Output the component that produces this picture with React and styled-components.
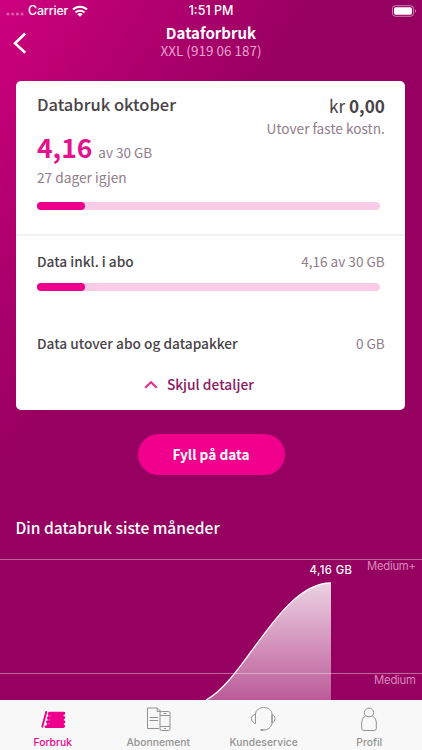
import React from "react";
import styled, { createGlobalStyle } from "styled-components";

const Global = createGlobalStyle`
  * { box-sizing: border-box; }
  body { margin: 0; }
`;

const brand = `"Noto Sans CJK SC", sans-serif`;
const system = `Inter, sans-serif`;

const Screen = styled.div`
  width: 422px;
  height: 750px;
  overflow: hidden;
  display: flex;
  flex-direction: column;
  color: #fff;
  font-family: ${brand};
  background: linear-gradient(124deg, #ce007e 0, #b2006f 130px, #960060 275px);
`;

const StatusBar = styled.div`
  height: 21px;
  flex: none;
  display: grid;
  grid-template-columns: 1fr auto 1fr;
  align-items: center;
  padding: 0 6px;
  font: 500 12.5px/21px ${system};
`;

const Carrier = styled.div`
  display: flex;
  align-items: center;
  letter-spacing: -0.2px;
`;

const Dots = styled.svg`
  width: 18px;
  height: 4px;
  margin: 7px 4px 0 0;
`;

const Wifi = styled.svg`
  width: 16px;
  height: 12px;
  margin-left: 4px;
`;

const Battery = styled.svg`
  width: 26px;
  height: 12px;
  justify-self: end;
  margin-right: -1px;
`;

const Header = styled.header`
  height: 60px;
  flex: none;
  display: grid;
  grid-template-columns: 40px 1fr 40px;
`;

const Back = styled.svg`
  width: 14px;
  height: 22px;
  margin: 11px 0 0 13px;
`;

const Titles = styled.div`
  text-align: center;
`;

const Line = styled.div`
  white-space: nowrap;
  font-size: ${(p) => p.$size}px;
  line-height: ${(p) => p.$line}px;
  font-weight: ${(p) => p.$weight || 400};
  color: ${(p) => p.$color || "inherit"};
`;

const Card = styled.section`
  flex: none;
  width: 389px;
  height: 329px;
  margin: 0 0 0 16.4px;
  border-radius: 5px;
  background: #fff;
  color: #484347;
`;

const Summary = styled.div`
  height: 155px;
  padding: 10px 20.6px 0;
  border-bottom: 2px solid #f2f0f2;
`;

const Details = styled.div`
  padding: 13px 20.6px 0;
`;

const Row = styled.div`
  display: flex;
  justify-content: space-between;
  align-items: ${(p) => p.$align || "center"};
  height: ${(p) => p.$height}px;
  margin-top: ${(p) => p.$top || 0}px;
`;

const Cost = styled.div`
  text-align: right;
  padding-top: 1px;
`;

const Amount = styled.span`
  font-weight: 700;
`;

const Usage = styled.div`
  display: flex;
  align-items: baseline;
  gap: 6px;
  height: 34px;
`;

const Track = styled.div`
  width: 343px;
  height: 8px;
  margin-top: ${(p) => p.$top}px;
  border-radius: 4px;
  background: #f9cbe6;
`;

const Fill = styled.div`
  height: 8px;
  border-radius: 4px;
  background: #ec008c;
`;

const Toggle = styled.div`
  display: flex;
  justify-content: center;
  align-items: center;
  gap: 9px;
  height: 24px;
  margin-top: 17px;
  padding-right: 24px;
`;

const Chevron = styled.svg`
  width: 14px;
  height: 9px;
`;

const Refill = styled.button`
  flex: none;
  align-self: center;
  width: 147px;
  height: 41px;
  margin-top: 24px;
  padding: 0;
  border: 0;
  border-radius: 21px;
  background: #f0008c;
  color: #fff;
  font: 700 13.7px/41px ${brand};
`;

const History = styled.div`
  height: 84px;
  flex: none;
  padding: 39px 15.5px 0;
`;

const Chart = styled.svg`
  display: block;
  width: 422px;
  height: 141px;
  flex: none;
  font-family: ${system};
`;

const TabBar = styled.nav`
  height: 50px;
  flex: none;
  display: grid;
  grid-template-columns: repeat(4, 1fr);
  background: #f8f8f8;
`;

const Tab = styled.div`
  display: flex;
  flex-direction: column;
  align-items: center;
  padding-top: 6px;
  color: ${(p) => (p.$active ? "#ec008c" : "#929292")};
  font: 500 10.3px/14px ${system};
  letter-spacing: 0.05px;
`;

const TabIcon = styled.svg`
  width: 28px;
  height: 27px;
  margin-bottom: 2px;
  fill: none;
  stroke: currentColor;
  stroke-width: 1;
`;

function Meter({ value, top }) {
  return (
    <Track $top={top}>
      <Fill style={{ width: `${value * 100}%` }} />
    </Track>
  );
}

export default function App() {
  const used = 4.16 / 30;
  return (
    <>
      <Global />
      <Screen>
        <StatusBar>
          <Carrier>
            <Dots viewBox="0 0 18 4" fill="#fff" opacity="0.35">
              <circle cx="2" cy="2" r="1.6" />
              <circle cx="6.7" cy="2" r="1.6" />
              <circle cx="11.4" cy="2" r="1.6" />
              <circle cx="16.1" cy="2" r="1.6" />
            </Dots>
            Carrier
            <Wifi viewBox="0 0 16 12" fill="none" stroke="#fff" strokeWidth="2.1">
              <path d="M1 4.6a10 10 0 0 1 14 0M3.6 7.5a6.3 6.3 0 0 1 8.8 0" />
              <path d="M8 11.8 5.3 9.3a3.9 3.9 0 0 1 5.4 0z" fill="#fff" stroke="none" />
            </Wifi>
          </Carrier>
          <span>1:51 PM</span>
          <Battery viewBox="0 0 26 12">
            <rect x="1.5" y="0.7" width="21" height="10.6" rx="3" fill="none" stroke="#fff" strokeOpacity="0.5" />
            <rect x="3" y="2.2" width="18" height="7.6" rx="1.7" fill="#fff" />
            <path d="M24 4.2c1.6.6 1.6 3 0 3.6z" fill="#fff" opacity="0.5" />
          </Battery>
        </StatusBar>
        <Header>
          <Back viewBox="0 0 14 22" fill="none" stroke="#fff" strokeWidth="2.6">
            <path d="M12.2 1.5 2 11.2l10.2 9.6" />
          </Back>
          <Titles>
            <Line $size={15} $line={23} $weight={700}>Dataforbruk</Line>
            <Line $size={13.5} $line={13} $color="#e9a2cf">XXL (919 06 187)</Line>
          </Titles>
        </Header>
        <Card>
          <Summary>
            <Row $height={42} $align="flex-start">
              <Line $size={16.5} $line={27} $weight={500}>Databruk oktober</Line>
              <Cost>
                <Line $size={17.1} $line={28}>kr <Amount>0,00</Amount></Line>
                <Line $size={13.65} $line={16} $color="#8f7c89">Utover faste kostn.</Line>
              </Cost>
            </Row>
            <Usage>
              <Line $size={26.4} $line={28} $weight={700} $color="#e2138c">4,16</Line>
              <Line $size={13.5} $line={28} $color="#8f7c89">av 30 GB</Line>
            </Usage>
            <Line $size={13.7} $line={20} $color="#8f7c89">27 dager igjen</Line>
            <Meter value={used} top={15} />
          </Summary>
          <Details>
            <Row $height={24}>
              <Line $size={13.7} $line={24} $weight={500}>Data inkl. i abo</Line>
              <Line $size={13.6} $line={24} $color="#8f7c89">4,16 av 30 GB</Line>
            </Row>
            <Meter value={used} top={10} />
            <Row $height={24} $top={40}>
              <Line $size={13.7} $line={24} $weight={500}>Data utover abo og datapakker</Line>
              <Line $size={13.6} $line={24} $color="#8f7c89">0 GB</Line>
            </Row>
            <Toggle>
              <Chevron viewBox="0 0 14 9" fill="none" stroke="#e2308f" strokeWidth="2.2">
                <path d="m1.2 7.8 5.8-5.6 5.8 5.6" />
              </Chevron>
              <Line $size={13.8} $line={24} $weight={500} $color="#8b1a5e">Skjul detaljer</Line>
            </Toggle>
          </Details>
        </Card>
        <Refill>Fyll på data</Refill>
        <History>
          <Line $size={15.55} $line={26} $weight={500}>Din databruk siste måneder</Line>
        </History>
        <Chart viewBox="0 559 422 141">
          <defs>
            <linearGradient id="area" x1="0" y1="583" x2="0" y2="700" gradientUnits="userSpaceOnUse">
              <stop offset="0" stopColor="#fff" stopOpacity="0.82" />
              <stop offset="1" stopColor="#fff" stopOpacity="0.36" />
            </linearGradient>
          </defs>
          <path d="M206 700C245 680 280 583 331 583V700z" fill="url(#area)" />
          <path d="M206 700C245 680 280 583 331 583" fill="none" stroke="#fff" strokeWidth="1.3" />
          <path d="M0 559.5H422M0 673.5H422" stroke="#fff" strokeOpacity="0.38" />
          <text x="309.5" y="574" fontSize="11.3" fontWeight="500" fill="#fff" textLength="42.5">4,16 GB</text>
          <text x="416" y="570.4" fontSize="11.3" textAnchor="end" fill="#d68abb" textLength="49">Medium+</text>
          <text x="416" y="684.4" fontSize="11.3" textAnchor="end" fill="#d68abb" textLength="42">Medium</text>
        </Chart>
        <TabBar>
          <Tab $active>
            <TabIcon viewBox="39 706 28 27">
              <path d="m42.3 726.7 3.9-14.7" strokeWidth="1.9" strokeLinecap="round" />
              <path d="M49 711.8H64q1.500 0 1.200 2-.2 1.200-1.700 1.300v.9q1.800 0 1.800 1.500 0 1.600-1.500 1.800v.9q1.600 0 1.500 1.800 0 1.500-1.500 1.700v.7q1.500.3 1.300 1.800-.2 1.800-1.700 1.800H46q-1.500 0-1.300-1.500.3-1.500 2.300-1.500v-1.700q-1.300-.5-1-1.700.3-1 1.600-1.200v-1.500q-.9-.5-.7-1.500.3-1 1.400-1.200v-1.500q-.9-.7-.6-1.700z" fill="currentColor" stroke="none" />
              <path d="M49.3 716h1.700M48.7 720h1.700M48.2 723.7h1.700" stroke="#f8f8f8" strokeWidth=".8" opacity=".55" />
            </TabIcon>
            Forbruk
          </Tab>
          <Tab>
            <TabIcon viewBox="144 706 28 27">
              <path d="M159 728.5H147.500v-20.500h9.700l3.800 3.500M157.200 708v3.500h3.800M149.500 717.500h8.500M149.500 720.500h8.500" />
              <path d="M161.500 711.5h7q1.500 0 1.500 1.500v16q0 1.500-1.500 1.500h-7q-1.500 0-1.500-1.500v-16q0-1.500 1.500-1.500M160 715.500h10M160 726.500h10M163.500 713.500h3M164 728.500h2" />
            </TabIcon>
            Abonnement
          </Tab>
          <Tab>
            <TabIcon viewBox="250 706 28 27">
              <path d="M255.500 714.500c0-9.300 16.500-9.300 16.500 0v8M255.500 714v9.500h-1c-1.200-1.500-3-2.500-3-5s2-3.500 4-4.500M272 714.500c2 .8 3 2 3 4s-1.400 3.700-3 5v-9M272 723.500c-.9 4-4.300 6.500-8.500 6.600" />
              <ellipse cx="262" cy="730.1" rx="1.8" ry="1" fill="currentColor" stroke="none" />
            </TabIcon>
            Kundeservice
          </Tab>
          <Tab>
            <TabIcon viewBox="355 706 28 27">
              <path d="M365.700 715.900a4.600 4.600 0 1 1 6.600 0q4 1.800 4 6.100v6.500q0 2-2 2h-10.600q-2 0-2-2V722q0-4.300 4-6.100zM365.700 715.900q3.300 2 6.600 0" />
            </TabIcon>
            Profil
          </Tab>
        </TabBar>
      </Screen>
    </>
  );
}
